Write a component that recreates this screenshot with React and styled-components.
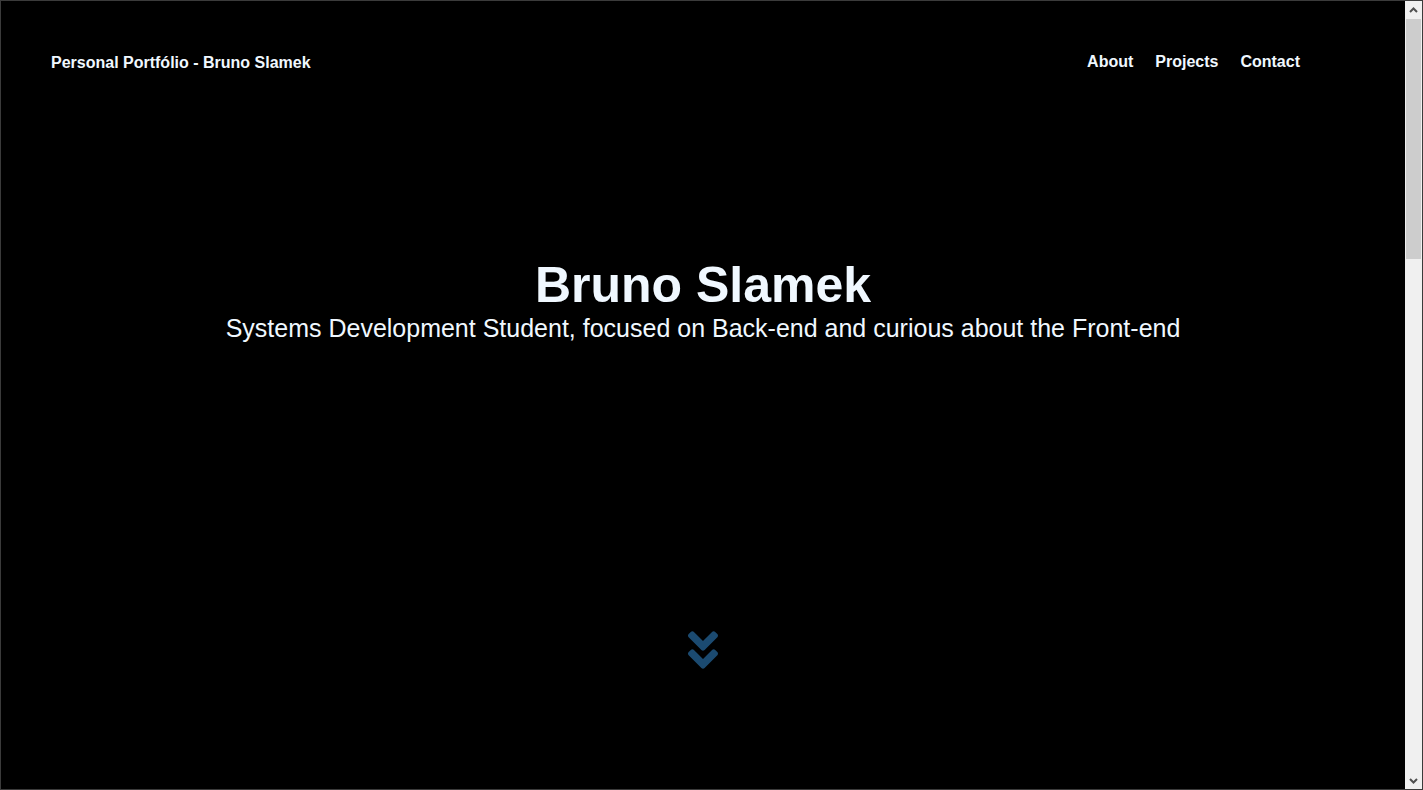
import styled, { createGlobalStyle } from "styled-components";
import { FaAngleDoubleDown } from "react-icons/fa";

const GlobalStyle = createGlobalStyle`
  html, body {
    margin: 0;
    padding: 0;
    background: #000;
    overflow: hidden;
  }

  body {
    font-family: "Liberation Sans", Arial, sans-serif;
    color: aliceblue;
  }

  * {
    box-sizing: border-box;
  }
`;

const Window = styled.div`
  height: 100vh;
  display: flex;
  border: 1px solid #3b3b3b;
  background: #000;
`;

const Main = styled.main`
  flex: 1;
  display: flex;
  flex-direction: column;
  min-width: 0;
`;

const Header = styled.header`
  height: 122px;
  display: flex;
  align-items: center;
  justify-content: space-between;
  padding: 0 105px 0 50px;
`;

const Brand = styled.span`
  font-size: 16px;
  font-weight: 700;
  color: aliceblue;
  padding-top: 1px;
`;

const Nav = styled.nav`
  display: flex;
  gap: 22px;
`;

const NavLink = styled.a`
  font-size: 16px;
  font-weight: 700;
  color: aliceblue;
  text-decoration: none;
  cursor: pointer;

  &:hover {
    color: #2a6496;
  }
`;

const Intro = styled.div`
  margin-top: 133px;
  text-align: center;
`;

const Title = styled.h1`
  margin: 0;
  font-size: 50px;
  font-weight: 700;
  line-height: normal;
`;

const Subtitle = styled.p`
  margin: 0;
  font-size: 25px;
  line-height: normal;
`;

const ScrollDown = styled.a`
  margin: 283px auto 0;
  display: flex;
  color: #1b4a70;
`;

const ScrollBar = styled.div`
  width: 17px;
  display: flex;
  flex-direction: column;
  background: #f0f0f0;
`;

const ScrollButton = styled.div`
  height: 17px;
  display: flex;
  align-items: center;
  justify-content: center;
  color: #505050;
`;

const Track = styled.div`
  flex: 1;
  padding: 1px 1px 0;
`;

const Thumb = styled.div`
  height: 240px;
  background: #cdcdcd;
`;

const Arrow = ({ dir }) => (
  <svg width="9" height="6" viewBox="0 0 9 6">
    <path
      d={dir === "up" ? "M1 5 4.5 1.5 8 5" : "M1 1 4.5 4.5 8 1"}
      fill="none"
      stroke="currentColor"
      strokeWidth="2"
    />
  </svg>
);

const links = [
  { text: "About", to: "#about" },
  { text: "Projects", to: "#projects" },
  { text: "Contact", to: "#contact" },
];

export default function App() {
  return (
    <>
      <GlobalStyle />
      <Window>
        <Main>
          <Header>
            <Brand>Personal Portfólio - Bruno Slamek</Brand>
            <Nav>
              {links.map((l) => (
                <NavLink key={l.text} href={l.to}>
                  {l.text}
                </NavLink>
              ))}
            </Nav>
          </Header>
          <Intro>
            <Title>Bruno Slamek</Title>
            <Subtitle>
              Systems Development Student, focused on Back-end and curious
              about the Front-end
            </Subtitle>
          </Intro>
          <ScrollDown href="#about">
            <FaAngleDoubleDown size={48} />
          </ScrollDown>
        </Main>
        <ScrollBar>
          <ScrollButton>
            <Arrow dir="up" />
          </ScrollButton>
          <Track>
            <Thumb />
          </Track>
          <ScrollButton>
            <Arrow dir="down" />
          </ScrollButton>
        </ScrollBar>
      </Window>
    </>
  );
}
